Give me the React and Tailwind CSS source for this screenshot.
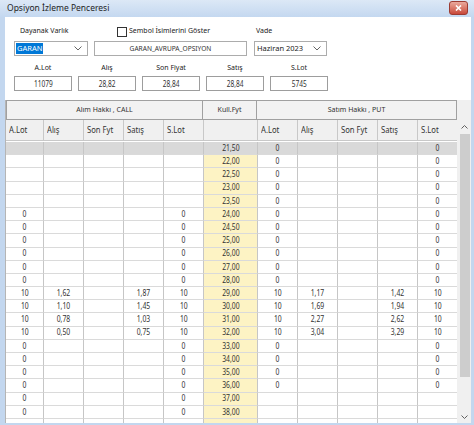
import React from "react";

const ui = { fontFamily: "'Noto Sans', 'Open Sans', sans-serif" };

const rows = [
  { k: "21,50", c: ["", "", "", "", ""], p: ["0", "", "", "", "0"], sel: true },
  { k: "22,00", c: ["", "", "", "", ""], p: ["0", "", "", "", "0"] },
  { k: "22,50", c: ["", "", "", "", ""], p: ["0", "", "", "", "0"] },
  { k: "23,00", c: ["", "", "", "", ""], p: ["0", "", "", "", "0"] },
  { k: "23,50", c: ["", "", "", "", ""], p: ["0", "", "", "", "0"] },
  { k: "24,00", c: ["0", "", "", "", "0"], p: ["0", "", "", "", "0"] },
  { k: "24,50", c: ["0", "", "", "", "0"], p: ["0", "", "", "", "0"] },
  { k: "25,00", c: ["0", "", "", "", "0"], p: ["0", "", "", "", "0"] },
  { k: "26,00", c: ["0", "", "", "", "0"], p: ["0", "", "", "", "0"] },
  { k: "27,00", c: ["0", "", "", "", "0"], p: ["0", "", "", "", "0"] },
  { k: "28,00", c: ["0", "", "", "", "0"], p: ["0", "", "", "", "0"] },
  { k: "29,00", c: ["10", "1,62", "", "1,87", "10"], p: ["10", "1,17", "", "1,42", "10"] },
  { k: "30,00", c: ["10", "1,10", "", "1,45", "10"], p: ["10", "1,69", "", "1,94", "10"] },
  { k: "31,00", c: ["10", "0,78", "", "1,03", "10"], p: ["10", "2,27", "", "2,62", "10"] },
  { k: "32,00", c: ["10", "0,50", "", "0,75", "10"], p: ["10", "3,04", "", "3,29", "10"] },
  { k: "33,00", c: ["0", "", "", "", "0"], p: ["0", "", "", "", "0"] },
  { k: "34,00", c: ["0", "", "", "", "0"], p: ["0", "", "", "", "0"] },
  { k: "35,00", c: ["0", "", "", "", "0"], p: ["0", "", "", "", "0"] },
  { k: "36,00", c: ["0", "", "", "", "0"], p: ["0", "", "", "", "0"] },
  { k: "37,00", c: ["0", "", "", "", "0"], p: ["", "", "", "", ""] },
  { k: "38,00", c: ["0", "", "", "", "0"], p: ["", "", "", "", ""] },
  { k: "", c: ["", "", "", "", ""], p: ["", "", "", "", ""] },
];

const cols = "grid grid-cols-[38px_40px_40px_40px_40px_54px_40px_40px_40px_40px_40px]";
const heads = ["A.Lot", "Alış", "Son Fyt", "Satış", "S.Lot"];
const cell = "border-r border-b border-r-[#c6c6c6] border-b-[#dadada] flex items-center justify-center";

function Chevron() {
  return (
    <svg width="8" height="5" viewBox="0 0 8 5">
      <polyline points="0.5,0.5 4,4 7.5,0.5" fill="none" stroke="#666" strokeWidth="1" />
    </svg>
  );
}

function Combo({ w, children }) {
  return (
    <div className={`${w} h-[15px] border border-[#acacac] bg-white flex items-center pl-[1px] pr-[5px] justify-between`}>
      {children}
      <Chevron />
    </div>
  );
}

function Box({ children }) {
  return (
    <div className="w-[58px] h-[15px] border border-[#9d9d9d] bg-white flex items-center justify-center text-[8px] text-[#333]">
      <span className="inline-block scale-x-[0.82]">{children}</span>
    </div>
  );
}

function T({ v }) {
  return v ? <span className="inline-block scale-x-[0.8]">{v}</span> : null;
}

function Row({ r }) {
  const base = r.sel ? "bg-[#d9d9d9]" : "bg-white";
  return (
    <div className={`${cols} h-[13.2px] shrink-0 text-[8.5px] leading-none text-[#333]`}>
      {r.c.map((v, i) => (
        <div key={"c" + i} className={`${base} ${cell}`}><T v={v} /></div>
      ))}
      <div className={`${r.sel ? "bg-[#d9d9d9]" : "bg-[#fdf3c4]"} ${cell}`}><T v={r.k} /></div>
      {r.p.map((v, i) => (
        <div key={"p" + i} className={`${base} ${cell}`}><T v={v} /></div>
      ))}
    </div>
  );
}

export default function App() {
  return (
    <div className="w-[474px] h-[425px] bg-[#c3d7ef] flex flex-col overflow-hidden" style={ui}>
      <div className="h-[17px] shrink-0 flex items-center justify-between pl-[7px] pr-[6px] bg-gradient-to-b from-[#dce8f6] to-[#c4d8f0]">
        <span className="text-[8.5px] text-[#1e1e1e]">Opsiyon İzleme Penceresi</span>
        <div className="w-[19px] h-[14px] mb-[2px] rounded-[3px] border border-[#9c3b32] bg-gradient-to-b from-[#e9a99d] to-[#c8473a] flex items-center justify-center">
          <svg width="7" height="6" viewBox="0 0 7 6">
            <path d="M1 0.5 L6 5.5 M6 0.5 L1 5.5" stroke="#fff" strokeWidth="1.6" />
          </svg>
        </div>
      </div>

      <div className="flex-1 ml-[5px] mr-[3px] mb-[2px] bg-white flex flex-col min-h-0">
        <div className="h-[83px] shrink-0 pl-[9px] pt-[8px] text-[7px] text-[#222]">
          <div className="flex h-[13px] items-center">
            <div className="w-[80px] pl-[6px]">Dayanak Varlık</div>
            <div className="w-[161px] flex items-center pl-[23px]">
              <div className="w-[10px] h-[10px] border border-[#333] bg-white mr-[2px]" />
              <span>Sembol İsimlerini Göster</span>
            </div>
            <div className="pl-[1px]">Vade</div>
          </div>
          <div className="flex mt-[3px] gap-[6px]">
            <Combo w="w-[74px]">
              <span className="bg-[#0078d7] text-white text-[7.5px] px-[1px] leading-[11px]">GARAN</span>
            </Combo>
            <div className="w-[153px] h-[15px] border border-[#acacac] flex items-center justify-center text-[7.5px] text-[#333]">
              <span className="inline-block scale-x-[0.88]">GARAN_AVRUPA_OPSIYON</span>
            </div>
            <div className="ml-[1px]">
              <Combo w="w-[73px]">
                <span className="text-[7.5px] pl-[1px] text-[#222]">Haziran 2023</span>
              </Combo>
            </div>
          </div>
          <div className="flex mt-[6px] h-[12px] items-center gap-[6px]">
            {["A.Lot", "Alış", "Son Fiyat", "Satış", "S.Lot"].map((l) => (
              <div key={l} className="w-[58px] text-center">{l}</div>
            ))}
          </div>
          <div className="flex mt-[2px] gap-[6px]">
            <Box>11079</Box>
            <Box>28,82</Box>
            <Box>28,84</Box>
            <Box>28,84</Box>
            <Box>5745</Box>
          </div>
        </div>

        <div className="flex-1 flex min-h-0">
          <div className="w-[452px] flex flex-col overflow-hidden border-l border-[#b5b5b5]">
            <div className="flex h-[20px] shrink-0 text-[7px] text-[#333]">
              <div className="w-[197px] border border-[#a0a0a0] bg-[#f2f2f2] flex items-center justify-center">Alım Hakkı , CALL</div>
              <div className="w-[54px] border border-l-0 border-[#a0a0a0] bg-[#f2f2f2] flex items-center justify-center">Kull.Fyt</div>
              <div className="w-[200px] border border-l-0 border-[#a0a0a0] bg-[#f2f2f2] flex items-center justify-center">Satım Hakkı , PUT</div>
            </div>
            <div className={`${cols} h-[21px] shrink-0 text-[8.5px] text-[#333] bg-[#f0f0f0]`}>
              {heads.map((h) => (
                <div key={"hc" + h} className="border-r border-b border-[#c8c8c8] flex items-center pl-[3px]">
                  <span className="inline-block origin-left scale-x-[0.9]">{h}</span>
                </div>
              ))}
              <div className="border-r border-b border-[#c8c8c8]" />
              {heads.map((h) => (
                <div key={"hp" + h} className="border-r border-b border-[#c8c8c8] flex items-center pl-[3px]">
                  <span className="inline-block origin-left scale-x-[0.9]">{h}</span>
                </div>
              ))}
            </div>
            <div className="h-[1px] shrink-0" />
            {rows.map((r, i) => (
              <Row key={i} r={r} />
            ))}
          </div>
          <div className="w-[14px] bg-[#f0f0f0] flex flex-col items-center">
            <div className="h-[34px] shrink-0 flex items-end pb-[5px]">
              <svg width="7" height="4" viewBox="0 0 7 4">
                <polyline points="0.5,3.5 3.5,0.5 6.5,3.5" fill="none" stroke="#606060" strokeWidth="1" />
              </svg>
            </div>
            <div className="w-[10px] h-[243px] shrink-0 bg-[#cdcdcd] ml-[1px]" />
            <div className="flex-1 flex items-end pb-[4px]">
              <svg width="7" height="4" viewBox="0 0 7 4">
                <polyline points="0.5,0.5 3.5,3.5 6.5,0.5" fill="none" stroke="#606060" strokeWidth="1" />
              </svg>
            </div>
          </div>
        </div>
      </div>
    </div>
  );
}
